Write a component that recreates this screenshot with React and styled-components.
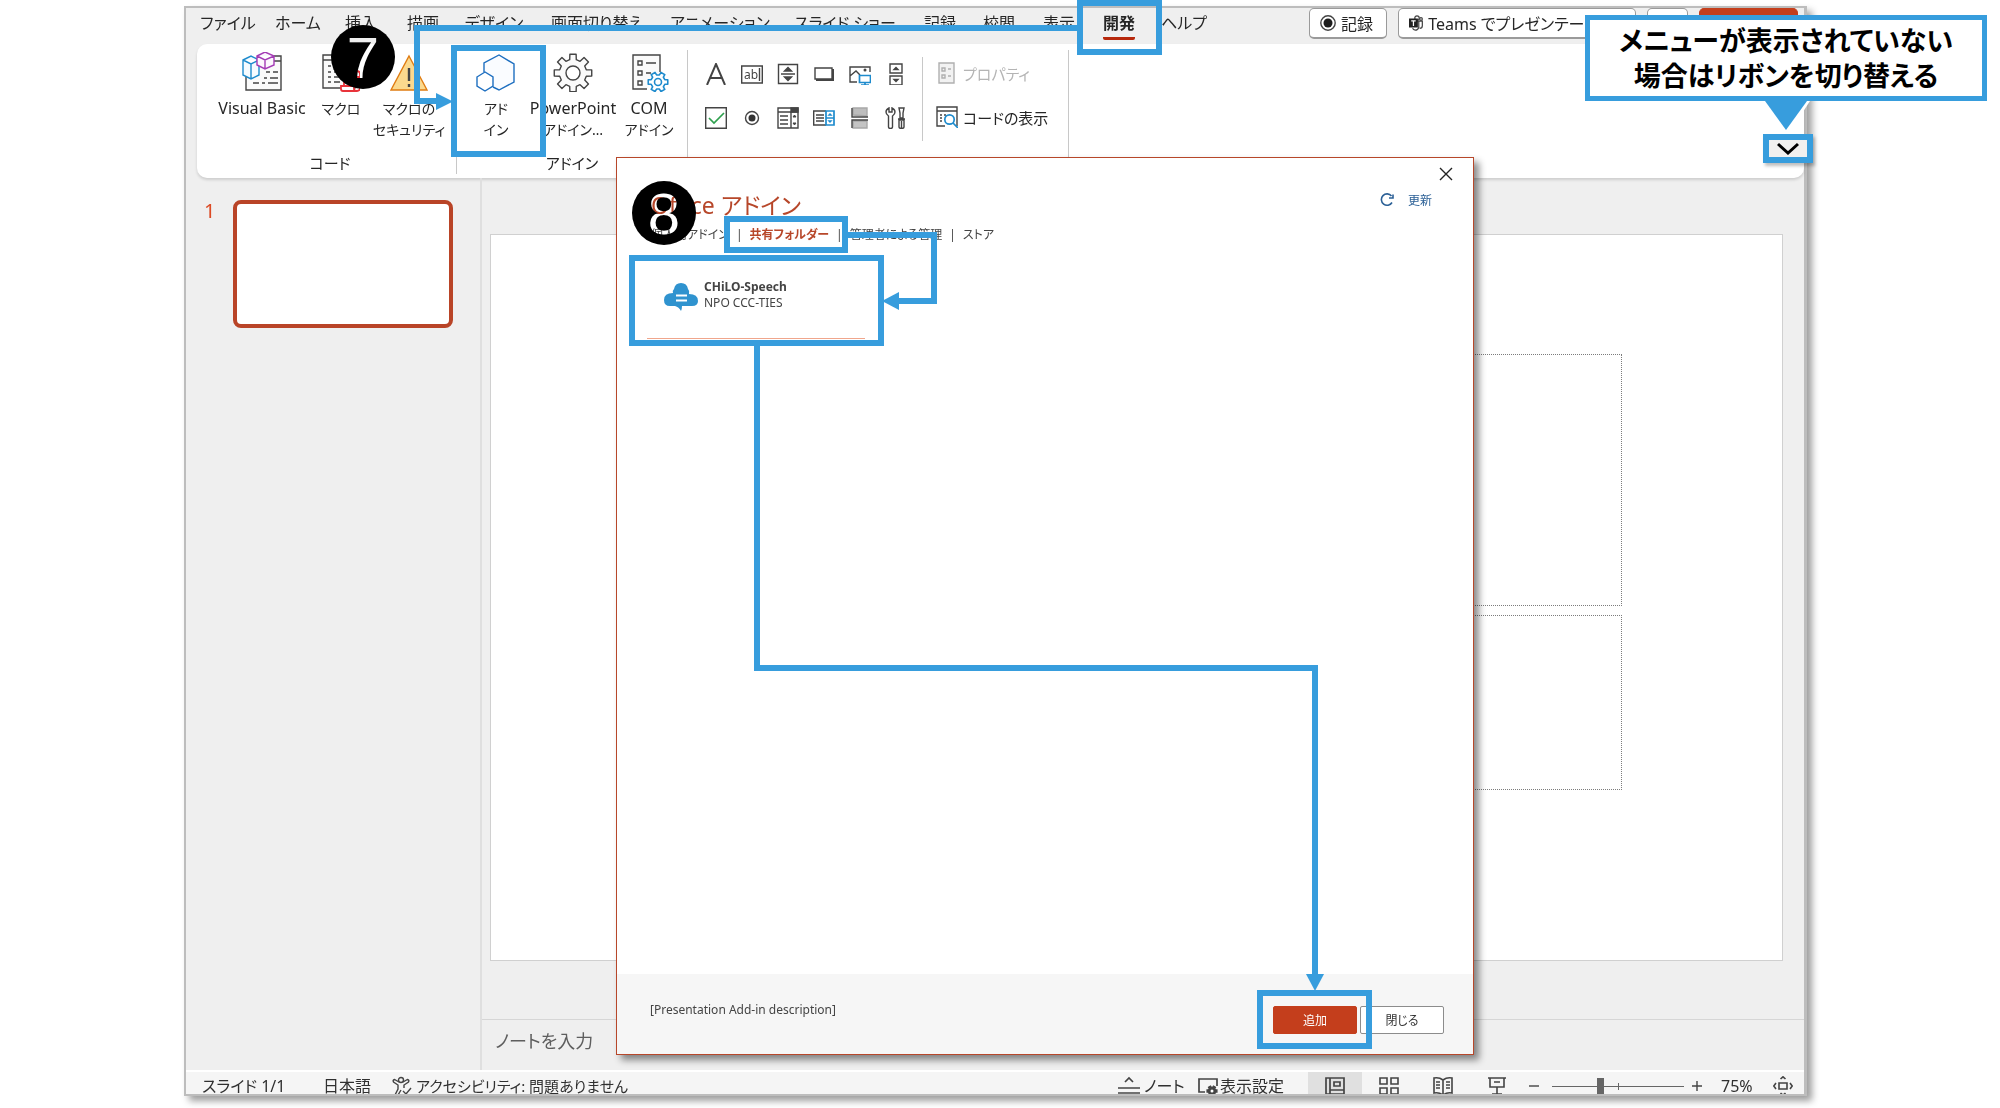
import React from "react";
import styled, { createGlobalStyle, css } from "styled-components";

const BLUE = "#379ddd";
const RED = "#b7472a";

const GlobalStyle = createGlobalStyle`
  *, *::before, *::after { box-sizing: border-box; }
  body {
    margin: 0;
    background: #fff;
    color: #262626;
    font-family: "Noto Sans", "Noto Sans CJK JP", sans-serif;
    font-feature-settings: "palt";
    font-size: 16px;
  }
  button {
    font: inherit;
    font-feature-settings: inherit;
    color: inherit;
    margin: 0;
    padding: 0;
    border: 0;
    background: none;
    white-space: nowrap;
  }
`;

/* ---------- application window ---------- */

const Stage = styled.div`
  position: relative;
  padding: 6px 193px 12px 184px;
  overflow: hidden;
`;

const Window = styled.main`
  display: flex;
  flex-direction: column;
  border: 2px solid #bdbdbd;
  border-right-width: 3px;
  background: #efefef;
  box-shadow: 5px 5px 7px rgba(0, 0, 0, 0.38);
`;

const TabStrip = styled.header`
  display: flex;
  justify-content: space-between;
  height: 36px;
  padding: 0 6px;
  overflow: hidden;
`;

const Tabs = styled.nav`
  display: flex;
`;

const Tab = styled.button`
  width: ${(p) => p.$w}px;
  height: 32px;
  line-height: 30px;
  font-weight: ${(p) => (p.$active ? 700 : 400)};
  span {
    display: inline-block;
    height: 32px;
    border-bottom: 3px solid ${(p) => (p.$active ? "#b7280c" : "transparent")};
    border-radius: 2px;
  }
`;

const TabActions = styled.div`
  display: flex;
  gap: 11px;
`;

const ActionButton = styled.button`
  display: flex;
  align-items: center;
  gap: 5px;
  width: ${(p) => p.$w}px;
  height: 31px;
  padding: 0 10px;
  overflow: hidden;
  border: 1px solid #9a9a9a;
  border-bottom-width: 2px;
  border-radius: 5px;
  background: #fff;
  ${(p) =>
    p.$primary &&
    css`
      justify-content: center;
      border-color: #c43e1c;
      background: #c43e1c;
      color: #fff;
    `}
`;

/* ---------- ribbon ---------- */

const Ribbon = styled.section`
  display: flex;
  height: 134px;
  margin-left: 11px;
  padding-top: 6px;
  border-radius: 10px;
  background: #fff;
  box-shadow: 0 2px 3px rgba(0, 0, 0, 0.14);
`;

const Group = styled.div`
  display: flex;
  flex-direction: column;
  justify-content: space-between;
  height: 124px;
  padding-left: ${(p) => p.$pad || 0}px;
  padding-right: ${(p) => p.$padRight || 0}px;
  border-right: 1px solid #c8c8c8;
`;

const GroupItems = styled.div`
  display: flex;
`;

const GroupLabel = styled.div`
  height: 20px;
  line-height: 18px;
  font-size: 15px;
  text-align: center;
`;

const BigButton = styled.button`
  display: flex;
  flex-direction: column;
  align-items: center;
  width: ${(p) => p.$w}px;
  padding-top: 2px;
  line-height: 21px;
  svg { margin-bottom: 6px; }
`;

const Kana = styled.span`
  font-size: 14px;
`;

const ToolGrid = styled.div`
  display: grid;
  grid-template-columns: repeat(6, 36px);
  grid-auto-rows: 44px;
  padding: 2px 8px 0 10px;
`;

const ToolButton = styled.button`
  display: flex;
  align-items: center;
  justify-content: center;
`;

const CommandList = styled.div`
  display: flex;
  flex-direction: column;
  height: 84px;
  margin-top: 7px;
  padding: 0 20px 0 13px;
  border-left: 1px solid #c8c8c8;
`;

const CommandButton = styled.button`
  display: flex;
  align-items: center;
  gap: 5px;
  height: 44px;
  margin-top: ${(p) => (p.$first ? -6 : 0)}px;
  font-size: 15px;
  color: ${(p) => (p.disabled ? "#b4b4b4" : "#262626")};
`;

/* ---------- work area ---------- */

const Workspace = styled.section`
  display: flex;
`;

const SlideList = styled.aside`
  display: flex;
  align-items: flex-start;
  width: 296px;
  padding: 22px 0 0 18px;
  border-right: 2px solid #dfdfdf;
`;

const SlideNumber = styled.span`
  width: 29px;
  font-size: 20px;
  line-height: 22px;
  color: #dc4a24;
`;

const Thumbnail = styled.button`
  width: 220px;
  height: 128px;
  border: 4px solid #b94427;
  border-radius: 8px;
  background: #fff;
`;

const Editor = styled.div`
  flex: 1;
  min-width: 0;
`;

const Canvas = styled.div`
  padding: 56px 21px 58px 8px;
`;

const Slide = styled.div`
  display: flex;
  flex-direction: column;
  gap: 9px;
  aspect-ratio: 16 / 9;
  padding: 9.2% 12.4% 13.2%;
  border: 1px solid #d0d0d0;
  background: #fff;
`;

const Placeholder = styled.div`
  flex: ${(p) => p.$grow} 1 0;
  border: 1px dotted #7c7c7c;
`;

const Notes = styled.div`
  height: 51px;
  padding-left: 13px;
  border-top: 1px solid #d6d6d6;
  font-size: 18px;
  line-height: 42px;
  color: #5e5e5e;
`;

const StatusBar = styled.footer`
  display: flex;
  justify-content: space-between;
  height: 24px;
  padding: 0 11px 0 16px;
  overflow: hidden;
  border-top: 2px solid #fff;
  background: #f5f5f5;
  line-height: 28px;
  color: #303030;
`;

const StatusSide = styled.div`
  display: flex;
  height: 28px;
`;

const StatusButton = styled.button`
  display: flex;
  align-items: center;
  gap: ${(p) => p.$gap || 4}px;
  width: ${(p) => p.$w}px;
  height: 28px;
  justify-content: ${(p) => (p.$center ? "center" : "flex-start")};
  background: ${(p) => (p.$active ? "#e0e0e0" : "transparent")};
  font-size: ${(p) => (p.$small ? 15 : 16)}px;
  svg { flex: none; }
`;

const Zoom = styled.input`
  appearance: none;
  width: 132px;
  height: 28px;
  margin: 0 8px;
  background:
    linear-gradient(#666, #666) center / 1px 7px no-repeat,
    linear-gradient(#666, #666) center / 100% 1px no-repeat;
  &::-webkit-slider-thumb {
    appearance: none;
    width: 7px;
    height: 16px;
    background: #666;
  }
`;

/* ---------- add-in dialog ---------- */

const Dialog = styled.section`
  position: absolute;
  top: 157px;
  left: 616px;
  display: flex;
  flex-direction: column;
  width: 858px;
  height: 898px;
  border: 1px solid ${RED};
  background: #fff;
  box-shadow: 5px 5px 7px rgba(0, 0, 0, 0.45);
  font-size: 12px;
  color: #444;
`;

const DialogBody = styled.div`
  display: flex;
  flex: 1;
  flex-direction: column;
  padding: 9px 20px 0 34px;
`;

const CloseRow = styled.div`
  display: flex;
  justify-content: flex-end;
  height: 14px;
`;

const TitleRow = styled.div`
  display: flex;
  align-items: flex-start;
  justify-content: space-between;
  height: 45px;
  padding: 8px 21px 0 0;
`;

const DialogTitle = styled.h1`
  margin: 0;
  font-size: 23px;
  font-weight: 400;
  line-height: 32px;
  color: ${RED};
`;

const RefreshButton = styled.button`
  display: flex;
  align-items: center;
  gap: 14px;
  height: 22px;
  color: #2b6096;
`;

const Sources = styled.nav`
  display: flex;
  gap: 7px;
  height: 18px;
  line-height: 18px;
`;

const SourceLink = styled.a`
  color: ${(p) => (p.$active ? RED : "#444")};
  font-weight: ${(p) => (p.$active ? 700 : 400)};
  text-decoration: none;
`;

const AddInCard = styled.button`
  display: flex;
  gap: 6px;
  width: 218px;
  height: 65px;
  margin: 30px 0 0 -4px;
  padding: 5px 0 0 17px;
  border-bottom: 1px solid #f0a68c;
  line-height: 16px;
  text-align: left;
  svg { flex: none; margin-top: 4px; }
  strong { display: block; }
`;

const DialogFooter = styled.div`
  display: flex;
  justify-content: space-between;
  align-items: flex-start;
  height: 80px;
  padding: 32px 29px 0 33px;
  background: #f6f6f6;
`;

const Description = styled.p`
  margin: -6px 0 0;
  line-height: 20px;
`;

const FooterButtons = styled.div`
  display: flex;
  gap: 3px;
`;

const FooterButton = styled.button`
  width: 84px;
  height: 28px;
  border: 1px solid ${(p) => (p.$primary ? "#c43e1c" : "#8c8c8c")};
  border-radius: 2px;
  background: ${(p) => (p.$primary ? "#c43e1c" : "#fff")};
  color: ${(p) => (p.$primary ? "#fff" : "#333")};
`;

/* ---------- tutorial annotations, floating over the window ---------- */

const Highlight = styled.div`
  position: absolute;
  left: ${(p) => p.$x}px;
  top: ${(p) => p.$y}px;
  width: ${(p) => p.$w}px;
  height: ${(p) => p.$h}px;
  border: 6px solid ${BLUE};
`;

const Connectors = styled.svg`
  position: absolute;
  left: 0;
  top: 0;
`;

const StepBadge = styled.div`
  position: absolute;
  left: ${(p) => p.$x}px;
  top: ${(p) => p.$y}px;
  width: 64px;
  height: 64px;
  border-radius: 50%;
  background: #000;
  color: #fff;
  font-family: "Liberation Sans", Arial, sans-serif;
  font-size: 58px;
  line-height: 66px;
  text-align: center;
  mix-blend-mode: multiply;
`;

const Callout = styled.div`
  position: absolute;
  top: 15px;
  left: 1585px;
  width: 402px;
  height: 86px;
  padding-top: 3px;
  border: 5px solid ${BLUE};
  background: #fff;
  color: #000;
  font-size: 27px;
  font-weight: 700;
  line-height: 35px;
  text-align: center;
`;

const RibbonToggle = styled.button`
  position: absolute;
  top: 134px;
  left: 1763px;
  display: flex;
  align-items: center;
  justify-content: center;
  width: 50px;
  height: 29px;
  border: 6px solid ${BLUE};
  background: #f1f0ef;
  box-shadow: 2px 3px 3px rgba(0, 0, 0, 0.25);
`;

/* ---------- icons ---------- */

const Icon = ({ w = 22, h = w, box, children }) => (
  <svg
    width={w}
    height={h}
    viewBox={box || `0 0 ${w} ${h}`}
    fill="none"
    stroke="#444"
    strokeWidth="1.4"
    aria-hidden="true"
  >
    {children}
  </svg>
);

const gearPath = (cx, cy, r, teeth) => {
  const pts = [];
  const half = Math.PI / teeth;
  for (let i = 0; i < teeth; i++) {
    const a = (i * 2 * Math.PI) / teeth;
    [[-0.62, 0.72], [-0.42, 1], [0.42, 1], [0.62, 0.72]].forEach(([d, k]) => {
      const t = a + d * half;
      pts.push(`${(cx + r * k * Math.cos(t)).toFixed(2)} ${(cy + r * k * Math.sin(t)).toFixed(2)}`);
    });
  }
  return `M${pts.join("L")}Z`;
};

const VisualBasicIcon = () => (
  <Icon w={40}>
    <path d="M4 24V38H39V4H32" fill="#fafafa" />
    <path d="M31 9h8M24 20h4M31 20h5M22 26h3M28 26h8M11 31h6M20 31h3M26 31h10" />
    <path d="M1 8l8-4 8 4v15l-8 4-8-4zM1 8l8 4 8-4M9 12v15" fill="#f5fbff" stroke="#1e8bcd" />
    <path d="M15 4l8-4 9 4v9l-9 4-8-4zM15 4l8 4 9-4M23 8v9" fill="#fcf6fd" stroke="#a43bb5" />
  </Icon>
);

const MacroIcon = () => (
  <Icon w={38} h={40}>
    <path d="M1 3h32v33H1z" fill="#fafafa" />
    <path d="M1 8h32M6 14h3M12 14h12M6 20h3M12 20h10M6 25h3M12 25h8M6 30h3M12 30h6" />
    <path
      d="M22 34V22q0-3 3-3h9q4 0 4 3v3h-5M33 22v14M19 34h13v3q0 2 3 2H21q-2 0-2-2zM35 39q3 0 3-3V25"
      fill="#fff"
      stroke="#e8333a"
      strokeWidth="1.800"
    />
  </Icon>
);

const WarningIcon = () => (
  <Icon w={40}>
    <path d="M20 4L38 38H2Z" fill="#fbd98e" stroke="#e07c12" />
    <path d="M20 16v13M20 32v3" stroke="#444" strokeWidth="2.4" />
  </Icon>
);

const AddInIcon = () => (
  <Icon w={40}>
    <path d="M8 20V11L23 3l15 9v18L23 38l-6-3" fill="#fafcff" stroke="#1e6fc0" />
    <path d="M1 25l8-5 8 5v9l-8 5-8-5z" fill="#fff" stroke="#1e6fc0" />
  </Icon>
);

const GearIcon = () => (
  <Icon w={40}>
    <path d={gearPath(20, 21, 19, 8)} fill="#fafafa" strokeLinejoin="round" />
    <circle cx="20" cy="21" r="7" fill="#fff" />
  </Icon>
);

const ComIcon = () => (
  <Icon w={40}>
    <path d="M18 37H4V3h27v17" fill="#fafafa" />
    <path d="M9 9h4v4H9zM9 19h4v4H9zM9 29h4v4H9zM17 11h10M17 21h5" />
    <path d={gearPath(29, 30, 10, 6)} fill="#fff" stroke="#1e8bcd" strokeWidth="1.600" strokeLinejoin="round" />
    <circle cx="29" cy="30" r="3.500" stroke="#1e8bcd" strokeWidth="1.600" />
  </Icon>
);

const toolIcons = [
  ["ラベル", <path d="M2 22L11 1l9 21M5 15h12" strokeWidth="2" />],
  [
    "テキスト ボックス",
    <>
      <path d="M.7 3h20.600v17H.7z" />
      <text x="3" y="16" fontSize="12" fill="#444" stroke="none">ab</text>
      <path d="M18.500 5v13" />
    </>,
  ],
  [
    "スピン ボタン",
    <>
      <path d="M1.500 1.500h19v19h-19zM4 11h14" />
      <path d="M11 4.500l3.500 3.500h-7zM11 17.500l3.500-3.500h-7z" fill="#444" />
    </>,
  ],
  [
    "コマンド ボタン",
    <>
      <path d="M2 5h17v11H2z" />
      <path d="M3 17h17V6" strokeWidth="2" />
    </>,
  ],
  [
    "イメージ",
    <>
      <path d="M8 19H1V4h20v5M1 13l6-5 4 4" />
      <circle cx="16" cy="7" r="1.500" fill="#444" stroke="none" />
      <path d="M10.500 12.500h11v7h-11zM12 22h8M16 20v2" stroke="#1e8bcd" strokeWidth="1.700" />
    </>,
  ],
  [
    "スクロール バー",
    <>
      <path d="M5 1h12v9H5zM5 13h12v9H5z" />
      <path d="M11 4.500l2 2H9zM11 18.500l2-2H9z" fill="#444" />
    </>,
  ],
  [
    "チェック ボックス",
    <>
      <path d="M.7.7h20.600v20.600H.7z" />
      <path d="M4 11l5 5L19 6" stroke="#2fa04e" strokeWidth="1.700" />
    </>,
  ],
  [
    "オプション ボタン",
    <>
      <circle cx="11" cy="11" r="6.500" />
      <circle cx="11" cy="11" r="3.500" fill="#333" stroke="none" />
    </>,
  ],
  [
    "コンボ ボックス",
    <>
      <path d="M1 1h20v20H1zM1 5h20M14 5v16M3 9h8M3 13h8M3 17h8" />
      <path d="M14 1h7v4h-7z" fill="#444" />
      <path d="M17.500 8l1.500 2h-3zM17.500 18l1.500-2h-3z" fill="#444" strokeWidth="1" />
    </>,
  ],
  [
    "リスト ボックス",
    <>
      <path d="M13 18H.7V4H13M3 8h8M3 11h8M3 14h8" />
      <path d="M13 4h8v14h-8zM13 11h8" stroke="#1e8bcd" strokeWidth="1.700" />
      <path d="M17 7l1 1h-2zM17 15l1-1h-2z" stroke="#1e8bcd" />
    </>,
  ],
  [
    "トグル ボタン",
    <>
      <path d="M4 8V1h14v8z" fill="#bdbdbd" stroke="#a8a8a8" />
      <path d="M3 1v9h16" />
      <path d="M4 14h14v7H4z" fill="#c4c4c4" stroke="#a8a8a8" />
      <path d="M3 21V13h16" />
    </>,
  ],
  [
    "その他のコントロール",
    <>
      <path d="M4 1v4h3V1c2 1 3 2 3 4s-1 3-2.500 4v11q0 1.500-2 1.500t-2-1.500V9C2 8 1 7 1 5s1-3 3-4z" />
      <path d="M14 1h5l-1 5v5h-3V6zM13 12h7M14 13h5v7q0 1.500-2.500 1.500T14 20zM16.500 14v7" />
    </>,
  ],
];

const PropertiesIcon = () => (
  <Icon>
    <g stroke="#b0b0b0">
      <path d="M3 1h15v20H3z" fill="#f2f2f2" />
      <path d="M6 6h3v3H6zM6 13h3v3H6zM12 7h3M12 14h3" />
    </g>
  </Icon>
);

const CodeIcon = () => (
  <Icon>
    <path d="M9 20H1V1h20v19M1 5h20M4 9h2M8 9h2M4 12h2M4 15h2" />
    <circle cx="13.500" cy="13.500" r="4.700" fill="#fff" stroke="#1e8bcd" strokeWidth="1.700" />
    <path d="M17 17l5 5" stroke="#1e8bcd" strokeWidth="1.700" />
  </Icon>
);

const RecordIcon = () => (
  <Icon w={16}>
    <circle cx="8" cy="8" r="7.200" />
    <circle cx="8" cy="8" r="4.500" fill="#1c1c1c" stroke="none" />
  </Icon>
);

const TeamsIcon = () => (
  <Icon w={16} h={18}>
    <circle cx="9" cy="3.500" r="2.500" />
    <circle cx="13.500" cy="4.500" r="1.500" />
    <path d="M9 7h6v5q0 3-3 3M11 7v7q-1 3-4 3-2 0-3-2" />
    <path d="M0 4h10v10H0z" fill="#222" stroke="none" />
    <path d="M2.500 6.500h5M5 6.500v6" stroke="#fff" />
  </Icon>
);

const AccessibilityIcon = () => (
  <Icon w={20}>
    <circle cx="9" cy="4" r="2.500" />
    <path d="M7 6L2.500 3.500Q.5 4 1.500 6L6 9v4l-2.500 5q.5 2 2.500 1l3-5M11 6l4.500-2.500q2 .5 1 2.500L12 9v3M11 15l3 3 5-6" />
  </Icon>
);

const NotesIcon = () => (
  <Icon w={22} h={20}>
    <path d="M7 6l4-4 4 4M0 12h22M0 17h22" strokeWidth="1.700" />
  </Icon>
);

const DisplayIcon = () => (
  <Icon w={20}>
    <path d="M7 16H1V3h18v7" strokeWidth="1.700" />
    <path d={gearPath(14, 15, 5, 6)} fill="#444" />
    <circle cx="14" cy="15" r="1.500" fill="#fff" stroke="none" />
  </Icon>
);

const NormalViewIcon = () => (
  <Icon w={20}>
    <path d="M1 2h18v16H1zM5 2v16M5 14h14M9 6h6v4H9z" strokeWidth="1.700" />
  </Icon>
);

const SorterIcon = () => (
  <Icon w={20}>
    <path d="M1 2h7v6H1zM12 2h7v6h-7zM1 12h7v6H1zM12 12h7v6h-7z" strokeWidth="1.600" />
  </Icon>
);

const ReadingIcon = () => (
  <Icon w={20}>
    <path d="M10 4Q6 1 1 2v15q5-1 9 2 4-3 9-2V2q-5-1-9 2zM10 4v15M3 6h4M3 9h4M3 12h4M13 6h4M13 9h4M13 12h4" strokeWidth="1.600" />
  </Icon>
);

const SlideShowIcon = () => (
  <Icon w={18} h={20}>
    <path d="M0 2h18M2 2v9h14V2M6 6h6M9 11v7M4 18h10" strokeWidth="1.600" />
  </Icon>
);

const FitIcon = () => (
  <Icon w={20}>
    <path d="M6 7h8v6H6zM7.500 3L10 .8 12.500 3M7.500 17l2.500 2.200 2.500-2.200M3 7L.8 10 3 13M17 7l2.200 3L17 13" strokeWidth="1.600" />
  </Icon>
);

const CloudIcon = () => (
  <svg width="34" height="28" viewBox="0 0 34 28" aria-hidden="true">
    <path
      d="M9 10Q8 8 10 6 11 0 17 0t7 6q2 2 1 5 9 0 9 7 0 5-6 5H18q0 3-1 5-2-4-6-5H6q-6 0-6-6 0-7 9-7z"
      fill="#2f93cf"
    />
    <path d="M12 12.500h11M12 17.500h11" stroke="#fff" strokeWidth="2" />
  </svg>
);

/* ---------- content ---------- */

const tabs = [
  ["ファイル", 72], ["ホーム", 68], ["挿入", 58], ["描画", 66], ["デザイン", 76],
  ["画面切り替え", 130], ["アニメーション", 116], ["スライド ショー", 134], ["記録", 56],
  ["校閲", 62], ["表示", 58], ["開発", 62], ["ヘルプ", 68],
];

const codeButtons = [
  [["Visual Basic"], 96, VisualBasicIcon],
  [["マクロ"], 62, MacroIcon],
  [["マクロの", "セキュリティ"], 74, WarningIcon],
];

const addInButtons = [
  [["アド", "イン"], 78, AddInIcon],
  [["PowerPoint", "アドイン…"], 76, GearIcon],
  [["COM", "アドイン"], 76, ComIcon],
];

const BigButtons = ({ items }) => (
  <GroupItems>
    {items.map(([lines, w, Glyph]) => (
      <BigButton key={lines[0]} $w={w}>
        <Glyph />
        {lines.map((line) =>
          /^[A-Z]/.test(line) ? <span key={line}>{line}</span> : <Kana key={line}>{line}</Kana>
        )}
      </BigButton>
    ))}
  </GroupItems>
);

const AddInDialog = () => (
  <Dialog role="dialog" aria-label="Office アドイン">
    <DialogBody>
      <CloseRow>
        <button aria-label="閉じる">
          <Icon w={14}>
            <path d="M1 1l12 12M13 1L1 13" stroke="#222" />
          </Icon>
        </button>
      </CloseRow>
      <TitleRow>
        <DialogTitle>Office アドイン</DialogTitle>
        <RefreshButton>
          <Icon w={14}>
            <path d="M12 9.500A5.700 5.700 0 1 1 11.500 3M13 1.500V5H9" stroke="#2b6096" strokeWidth="1.600" />
          </Icon>
          更新
        </RefreshButton>
      </TitleRow>
      <Sources>
        <SourceLink href="#personal">個人用アドイン</SourceLink>
        <span>|</span>
        <SourceLink href="#shared" $active>共有フォルダー</SourceLink>
        <span>|</span>
        <SourceLink href="#managed">管理者による管理</SourceLink>
        <span>|</span>
        <SourceLink href="#store">ストア</SourceLink>
      </Sources>
      <AddInCard>
        <CloudIcon />
        <span>
          <strong>CHiLO-Speech</strong>
          NPO CCC-TIES
        </span>
      </AddInCard>
    </DialogBody>
    <DialogFooter>
      <Description>[Presentation Add-in description]</Description>
      <FooterButtons>
        <FooterButton $primary>追加</FooterButton>
        <FooterButton>閉じる</FooterButton>
      </FooterButtons>
    </DialogFooter>
  </Dialog>
);

const Annotations = () => (
  <>
    <StepBadge $x={331} $y={25}>7</StepBadge>
    <StepBadge $x={632} $y={181}>8</StepBadge>
    <Connectors width="1830" height="1060" fill="none" stroke={BLUE} strokeWidth="6" aria-hidden="true">
      <path d="M1078 28H417V101H438" />
      <path d="M847 235H934V301H898" />
      <path d="M757 345V668H1315V976" />
      <g fill={BLUE} stroke="none">
        <path d="M436 93l17 8.500-17 8.500z" />
        <path d="M899 292l-17 9 17 9z" />
        <path d="M1306 974h18l-9 17z" />
      </g>
      <path d="M1762 101h48l-24 37z" fill="#fff" stroke="none" />
      <path d="M1765 101h42l-21 29z" fill={BLUE} stroke="none" />
    </Connectors>
    <Highlight $x={1077} $y={0} $w={85} $h={55} />
    <Highlight $x={451} $y={45} $w={95} $h={112} />
    <Highlight $x={724} $y={216} $w={124} $h={37} />
    <Highlight $x={629} $y={255} $w={255} $h={91} />
    <Highlight $x={1257} $y={990} $w={115} $h={59} />
    <RibbonToggle aria-label="リボンの表示オプション">
      <Icon w={22} h={13}>
        <path d="M1 2l10 9L21 2" stroke="#000" strokeWidth="3" />
      </Icon>
    </RibbonToggle>
    <Callout>
      メニューが表示されていない
      <br />
      場合はリボンを切り替える
    </Callout>
  </>
);

export default function App() {
  return (
    <Stage>
      <GlobalStyle />
      <Window>
        <TabStrip>
          <Tabs>
            {tabs.map(([label, w]) => (
              <Tab key={label} $w={w} $active={label === "開発"}>
                <span>{label}</span>
              </Tab>
            ))}
          </Tabs>
          <TabActions>
            <ActionButton $w={78}>
              <RecordIcon />
              記録
            </ActionButton>
            <ActionButton $w={238}>
              <TeamsIcon />
              Teams でプレゼンテーション
            </ActionButton>
            <ActionButton $w={41} aria-label="コメント" />
            <ActionButton $w={99} $primary>共有</ActionButton>
          </TabActions>
        </TabStrip>

        <Ribbon>
          <Group $pad={17} $padRight={10}>
            <BigButtons items={codeButtons} />
            <GroupLabel>コード</GroupLabel>
          </Group>
          <Group>
            <BigButtons items={addInButtons} />
            <GroupLabel>アドイン</GroupLabel>
          </Group>
          <Group>
            <GroupItems>
              <ToolGrid>
                {toolIcons.map(([label, drawing]) => (
                  <ToolButton key={label} aria-label={label}>
                    <Icon>{drawing}</Icon>
                  </ToolButton>
                ))}
              </ToolGrid>
              <CommandList>
                <CommandButton $first disabled>
                  <PropertiesIcon />
                  プロパティ
                </CommandButton>
                <CommandButton>
                  <CodeIcon />
                  コードの表示
                </CommandButton>
              </CommandList>
            </GroupItems>
          </Group>
        </Ribbon>

        <Workspace>
          <SlideList>
            <SlideNumber>1</SlideNumber>
            <Thumbnail aria-label="スライド 1" />
          </SlideList>
          <Editor>
            <Canvas>
              <Slide>
                <Placeholder $grow={254} />
                <Placeholder $grow={175} />
              </Slide>
            </Canvas>
            <Notes>ノートを入力</Notes>
          </Editor>
        </Workspace>

        <StatusBar>
          <StatusSide>
            <StatusButton $w={121}>スライド 1/1</StatusButton>
            <StatusButton $w={69}>日本語</StatusButton>
            <StatusButton $small>
              <AccessibilityIcon />
              アクセシビリティ: 問題ありません
            </StatusButton>
          </StatusSide>
          <StatusSide>
            <StatusButton $w={80}>
              <NotesIcon />
              ノート
            </StatusButton>
            <StatusButton $w={110} $gap={2}>
              <DisplayIcon />
              表示設定
            </StatusButton>
            <StatusButton $w={54} $center $active aria-label="標準"><NormalViewIcon /></StatusButton>
            <StatusButton $w={54} $center aria-label="スライド一覧"><SorterIcon /></StatusButton>
            <StatusButton $w={54} $center aria-label="閲覧表示"><ReadingIcon /></StatusButton>
            <StatusButton $w={54} $center aria-label="スライド ショー"><SlideShowIcon /></StatusButton>
            <StatusButton $w={20} $center aria-label="縮小">
              <Icon w={10}><path d="M0 5h10" /></Icon>
            </StatusButton>
            <Zoom type="range" min="0" max="100" defaultValue="36" aria-label="ズーム" />
            <StatusButton $w={29} aria-label="拡大">
              <Icon w={10}><path d="M0 5h10M5 0v10" /></Icon>
            </StatusButton>
            <StatusButton $w={52}>75%</StatusButton>
            <StatusButton aria-label="ウィンドウに合わせる"><FitIcon /></StatusButton>
          </StatusSide>
        </StatusBar>
      </Window>
      <AddInDialog />
      <Annotations />
    </Stage>
  );
}
